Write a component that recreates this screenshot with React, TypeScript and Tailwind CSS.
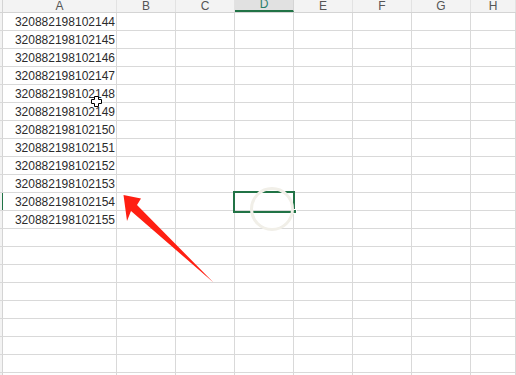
const cols = [
  { key: "A", w: "w-[114px]" },
  { key: "B", w: "w-[59px]" },
  { key: "C", w: "w-[59px]" },
  { key: "D", w: "w-[59px]" },
  { key: "E", w: "w-[59px]" },
  { key: "F", w: "w-[59px]" },
  { key: "G", w: "w-[59px]" },
  { key: "H", w: "flex-1" },
];

const values = Array.from({ length: 12 }, (_, i) => `3208821981021${44 + i}`);
const ROWS = 21;
const SELECTED_ROW = 10;

export default function App() {
  return (
    <div className="relative h-[375px] w-[516px] overflow-hidden bg-white font-['Liberation_Sans',Arial,sans-serif] text-[12px]">
      {/* column headers */}
      <div className="flex h-[13px] border-b border-[#d4d4d4] bg-[#f3f3f3]">
        <div className="w-[3px] shrink-0 border-r border-[#d4d4d4]" />
        {cols.map((c) => (
          <div
            key={c.key}
            className={`${c.w} flex shrink-0 items-end justify-center border-r leading-[12px] ${
              c.key === "D"
                ? "border-[#d4d4d4] border-b-2 border-b-[#217346] bg-[#e1e1e1] text-[#2a7f6a]"
                : "border-[#e2e2e2] text-[#555]"
            }`}
          >
            <span className="-mt-[1px]">{c.key}</span>
          </div>
        ))}
      </div>

      {/* rows */}
      {Array.from({ length: ROWS }, (_, r) => (
        <div key={r} className="flex h-[18px] border-b border-[#d9d9d9]">
          <div
            className={`w-[3px] shrink-0 border-r bg-[#f3f3f3] ${
              r === SELECTED_ROW ? "border-r-[#217346]" : "border-[#d4d4d4]"
            }`}
          />
          {cols.map((c) => (
            <div
              key={c.key}
              className={`${c.w} flex shrink-0 items-end justify-end border-r border-[#d9d9d9] pr-[1px] leading-[15px] text-[#2b2b2b]`}
            >
              {c.key === "A" && values[r]}
            </div>
          ))}
        </div>
      ))}

      {/* selected cell D12 */}
      <div className="absolute left-[233px] top-[191px] h-[22px] w-[62px] border-2 border-[#217346]" />
      <div className="absolute left-[292px] top-[209px] h-[5px] w-[5px] border border-white bg-[#217346]" />

      {/* faint busy circle */}
      <div className="absolute left-[250px] top-[187px] h-[44px] w-[44px] rounded-full border-[3px] border-[#f1efe8]" />

      {/* cursor */}
      <svg className="absolute left-[91px] top-[96px]" width="11" height="11" viewBox="0 0 11 11">
        <path
          d="M3.5 0.5h4v3h3v4h-3v3h-4v-3h-3v-4h3z"
          fill="#fff"
          stroke="#000"
          strokeWidth="1"
        />
      </svg>

      {/* red arrow */}
      <svg className="pointer-events-none absolute left-0 top-0" width="516" height="375" viewBox="0 0 516 375">
        <polygon
          points="123.5,195 141,198.5 137,205 213.5,282.5 131,211 127,221"
          fill="#ff1f12"
        />
      </svg>
    </div>
  );
}
